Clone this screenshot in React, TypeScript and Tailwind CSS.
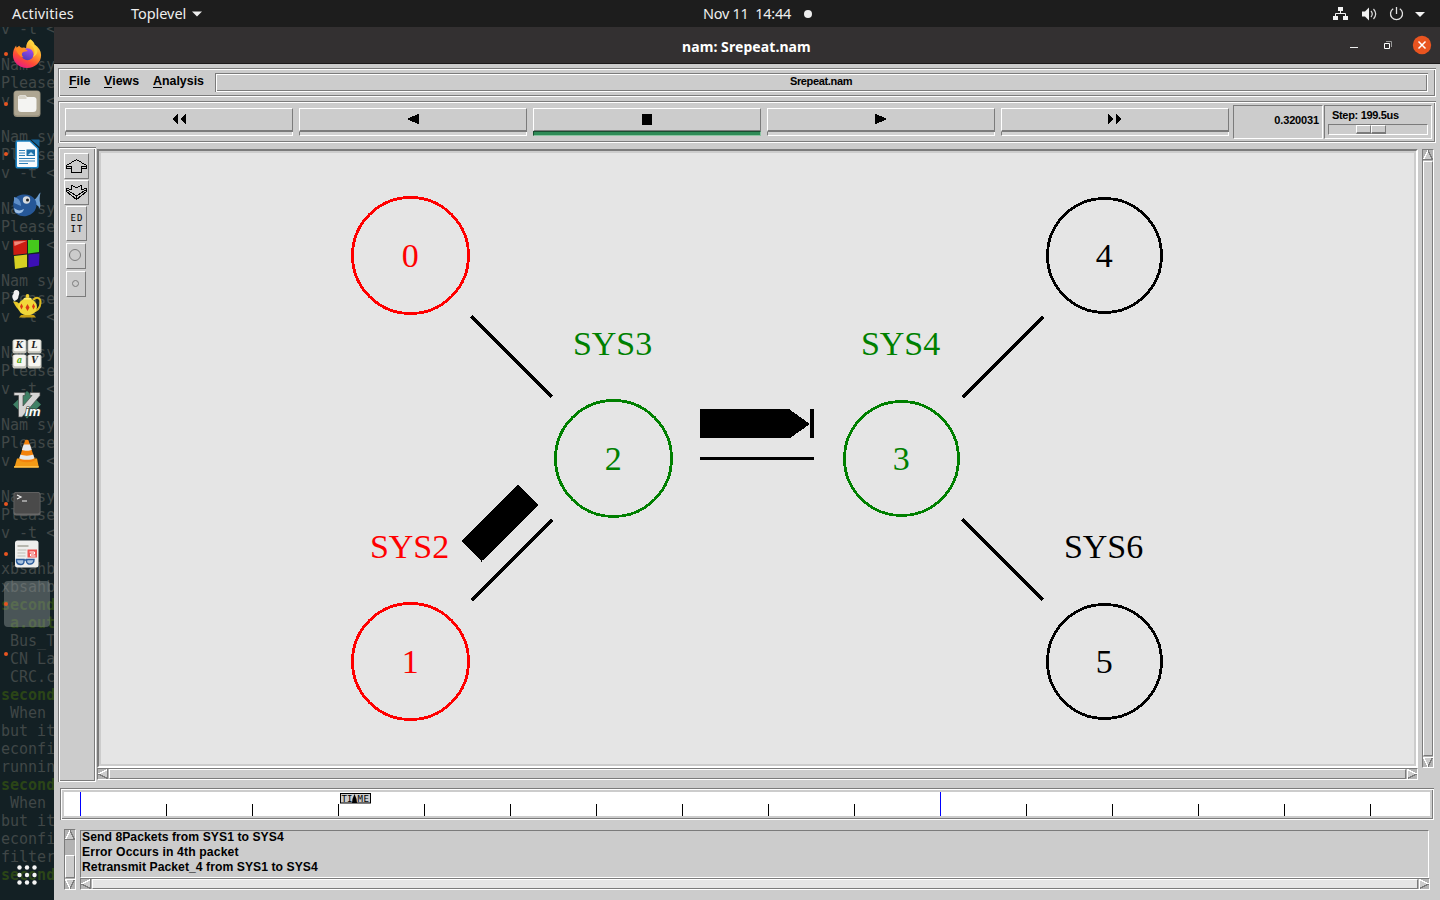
import React from "react";

const groove =
  "shadow-[inset_1px_1px_0_#7b7b7b,inset_-1px_-1px_0_#fff,inset_2px_2px_0_#fff,inset_-2px_-2px_0_#7b7b7b]";
const raised = "border border-t-white border-l-white border-r-[#7b7b7b] border-b-[#7b7b7b]";
const sunken = "border border-t-[#7b7b7b] border-l-[#7b7b7b] border-r-white border-b-white";

const block = ["Nam sy", "Please", "v -t <", ""];
const terminalLines = [
  "v -t <", "",
  ...block, ...block, ...block, ...block, ...block, ...block, ...block,
  "xbsahb", "xbsahb", "second", " a.out", " Bus_T", " CN La", " CRC.c", "second", " When ",
  "but it", "econfi", "runnin", "second", " When ", "but it", "econfi", "filter", "second",
];

function Icon({ children }: { children?: React.ReactNode }) {
  return (
    <svg width="32" height="32" viewBox="0 0 32 32" className="shrink-0">
      {children}
    </svg>
  );
}

const Firefox = () => (
  <Icon>
    <defs>
      <linearGradient id="fx" x1="0.8" y1="0" x2="0.25" y2="1">
        <stop offset="0" stopColor="#fff04a" />
        <stop offset="0.4" stopColor="#ffa02c" />
        <stop offset="0.7" stopColor="#ff4b36" />
        <stop offset="1" stopColor="#e6168b" />
      </linearGradient>
      <linearGradient id="fp" x1="0.7" y1="0" x2="0.3" y2="1">
        <stop offset="0" stopColor="#a94bf0" />
        <stop offset="1" stopColor="#4b3cb8" />
      </linearGradient>
    </defs>
    <path d="M19.5 1.3c2.2 1.4 3.6 3.2 4.2 5.4 4 2.6 6.4 6 6.4 10.2 0 7.4-6 13-14 13s-14.200-5.600-14.200-13c0-4 1.400-7.200 3.200-9.500l.5 2.600 2.500-2.200 2 2.300c1.900-.8 3.700-.8 5 .1 0-4 1.500-7.400 4.400-8.900z" fill="url(#fx)" />
    <circle cx="16.500" cy="16.200" r="6" fill="url(#fp)" />
    <path d="M4 10c4-1.500 8-1 13 3l-4 .8c-3 1-2.500 4-.5 5.500-4-.5-6-4-8.500-9.300z" fill="#ff8a22" />
    <path d="M19 6c4 3 6 8 3 13 5-2 6-8 2-12z" fill="#ffd43c" />
  </Icon>
);
const Files = () => (
  <Icon>
    <rect x="2.500" y="2.500" width="27" height="26.500" rx="3.500" fill="#968e7b" />
    <rect x="3.300" y="3" width="25.400" height="24.500" rx="3" fill="#aea692" />
    <path d="M7 10c0-1.700.8-2.700 2.400-2.700h4c1.200 0 1.800.4 2.500 1.700h7c1.500 0 2.600 1 2.600 2.500v9c0 2.500-1 3.500-3.500 3.500H10.500C8 24 7 23 7 20.500z" fill="#f4f4f2" />
    <path d="M7.500 11V9.500c0-1 .8-1.700 2-1.700h3.700c1 0 1.500.8 2.300 1.700.5.500.3 1.500-.8 1.500z" fill="#d8d4c8" />
  </Icon>
);
const Writer = () => (
  <Icon>
    <path d="M6.500 3H19l8 7.500V28c0 1.200-.7 1.800-2 1.800H7c-1.300 0-1.800-.6-1.800-1.800V4.500C5.200 3.500 5.500 3 6.500 3z" fill="#f7fafc" stroke="#1b83c4" strokeWidth="1.600" />
    <path d="M20 1.500h8.500V9z" fill="#17659a" />
    <path d="M8 12.500h6M8 15h6M8 17.500h6M8 20.500h16M8 23h16M8 25.500h9" stroke="#2c7fb8" strokeWidth="1.200" />
    <rect x="15.500" y="11.500" width="8.500" height="6.500" fill="#1c6fa8" />
    <path d="M17 17l3-3 3 3z" fill="#bfe0f2" />
  </Icon>
);
const Fish = () => (
  <Icon>
    <path d="M23.500 11.500c2.500-1 3.500-5 6-7-1 4-1 8-.5 10 .5 2 .5 4-.5 6-1-3-3-4-5-4z" fill="#6f9fd0" />
    <path d="M3 12c2-4 6-5.500 11-5.500 6.500 0 11.500 4.500 11.500 10 0 6-4 10-10 11.500C9 29 3 26 2.500 20c0-3-1-5 .5-8z" fill="#265797" />
    <path d="M3 9c5 1 7 5 7 9l-7-3z" fill="#5f8fc8" />
    <path d="M3 20c4 3 6 3 10 1-1 4-5 6-9 3z" fill="#9dbfe4" />
    <circle cx="15.500" cy="12" r="3.700" fill="#d6dade" />
    <circle cx="16.500" cy="12" r="1.500" fill="#222" />
  </Icon>
);
const Blocks = () => (
  <Icon>
    <path d="M2 2.500L16 2v13.500L2.500 17z" fill="#cc1c12" />
    <path d="M17 2h11v12l-11 1.500z" fill="#45c91c" />
    <path d="M3 18l13-1.500V29L4 31z" fill="#d6d023" />
    <path d="M17.500 16.500l11-1-.5 12-10.500 2z" fill="#3c0fb4" />
    <path d="M3 3.500L15.500 3l-12 5z" fill="#f0897a" />
  </Icon>
);
const Teapot = () => (
  <Icon>
    <path d="M22 12c4-4 8-2 7.500 3-.4 5-3.500 8-8 9" fill="none" stroke="#dcbb20" strokeWidth="2" />
    <path d="M2 13.500c3-.5 5 .5 7 3l1 6c-4-1-5-4-8-9z" fill="#e8c928" />
    <ellipse cx="16.500" cy="19" rx="9.500" ry="8.500" fill="#f2d83a" />
    <path d="M10 27h13l2 2.500H8z" fill="#c99f12" />
    <path d="M12 11.500c1-3 8-3 9 0z" fill="#ffed72" />
    <circle cx="16.500" cy="8" r="1.900" fill="#f0cf30" />
    <path d="M10.500 15.500l1.500 3-1.500 3-1.500-3zM16.500 16l2 3.500-2 3.500-2-3.500zM22.500 15.500l1.500 3-1.500 3-1.500-3z" fill="#d93a16" />
    <path d="M3.500 13c-3-3-2.500-6-1-7 0-3 1-4.500 3.500-4 3 1 2.500 4 1.500 6 0 2-1 4-4 5z" fill="#f2f2f2" />
  </Icon>
);
const Keys = () => (
  <Icon>
    {[[1.500, 1.500, "K"], [16.500, 1.500, "L"], [1.500, 16.500, "a"], [16.500, 16.500, "V"]].map(([x, y, t]) => (
      <g key={t as string}>
        <rect x={x} y={y} width="14" height="14" rx="2" fill="#c6c6bd" />
        <rect x={(x as number) + 1} y={(y as number) + 0.3} width="12" height="11.500" rx="1.800" fill="#f6f6f1" />
        <text x={(x as number) + 7} y={(y as number) + 8} textAnchor="middle" fontFamily="DejaVu Serif" fontWeight="bold" fontStyle="italic" fontSize="8.500" fill={t === "a" ? "#58a618" : "#222"}>{t}</text>
      </g>
    ))}
  </Icon>
);
const Vim = () => (
  <Icon>
    <path d="M16 3l14 13.500L16 30.500 2 16.500z" fill="#3f8065" />
    <path d="M3 4.500h11v3h-2v10.500L21 7.500h-2v-3h10v3L11 29H7.500V7.500H3z" fill="#d5d5d5" stroke="#4a4a4a" strokeWidth=".7" />
    <text x="14" y="27.500" fontFamily="Liberation Sans" fontWeight="bold" fontStyle="italic" fontSize="12.500" textLength="15.500" lengthAdjust="spacingAndGlyphs" fill="#fff" stroke="#2d3a36" strokeWidth="1.200" paintOrder="stroke">im</text>
  </Icon>
);
const Cone = () => (
  <Icon>
    <path d="M6 20.500h20l1.800 8.700H3.500z" fill="#f39a16" />
    <path d="M3.200 28h24.500v1.700H3z" fill="#ffbd40" />
    <path d="M14 2.500c.5-1 3-1 3.500 0L24 22c-3 3-13 3-16 0z" fill="#f3820c" />
    <path d="M12.700 6.500h6.200l1.800 5.200c-2 1.400-7.500 1.400-9.800 0zM9.500 16.500c3 1.500 9.800 1.500 12.700 0l1.200 3.700c-3 2-12 2-15.200 0z" fill="#e6e9ec" />
  </Icon>
);
const Term = () => (
  <Icon>
    <rect x="2.500" y="4" width="27" height="23.500" rx="2.500" fill="#686868" />
    <rect x="3.300" y="4.800" width="25.400" height="20.700" rx="2" fill="#4a4a4a" />
    <path d="M6 7l4 2-4 2M11 13h5" fill="none" stroke="#eee" strokeWidth="1.200" />
  </Icon>
);
const Reader = () => (
  <Icon>
    <rect x="4" y="2.500" width="23.500" height="27" rx="2.500" fill="#eeeeec" />
    <path d="M6.500 8h11" stroke="#b7b7ae" strokeWidth="2" />
    <path d="M6.500 12h9M6.500 15h8M6.500 18h8" stroke="#bdbdb5" strokeWidth="1" />
    <rect x="16.500" y="11.500" width="9.500" height="8" fill="#ef5350" />
    <path d="M18.500 14h5v2h-4v2h5" fill="none" stroke="#fff" strokeWidth="1" />
    <path d="M5.500 21.500h7.500v2c0 4-6.500 4-7.500 0zM15.500 21.500H23c0 5.500-7 6-7.500 2zM12.500 22h4" fill="#a9c3df" stroke="#2c5d9c" strokeWidth="1.400" />
  </Icon>
);

const dock = [
  { el: <Firefox />, dot: true },
  { el: <Files />, dot: true },
  { el: <Writer />, dot: true },
  { el: <Fish />, dot: false },
  { el: <Blocks />, dot: false },
  { el: <Teapot />, dot: false },
  { el: <Keys />, dot: false },
  { el: <Vim />, dot: false },
  { el: <Cone />, dot: false },
  { el: <Term />, dot: true },
  { el: <Reader />, dot: true },
  { el: <Icon />, dot: true, active: true },
  { el: <Icon />, dot: true },
];

function Sidebar() {
  return (
    <aside className="relative h-full w-[54px] shrink-0 overflow-hidden bg-[#132024]">
      <div className="absolute -top-[7px] left-px">
        {terminalLines.map((t, i) => (
          <div
            key={i}
            className={
              t === "second" || t === " a.out"
                ? "h-[18px] font-['DejaVu_Sans_Mono',monospace] text-[15px] leading-[18px] font-bold whitespace-pre text-[#2b4517]"
                : "h-[18px] font-['DejaVu_Sans_Mono',monospace] text-[15px] leading-[18px] whitespace-pre text-[#404747]"
            }
          >
            {t}
          </div>
        ))}
      </div>
      <div className="relative flex h-full flex-col pt-[2px]">
        {dock.map((d, i) => (
          <div key={i} className="flex h-[50px] items-center">
            <div
              className={
                d.active
                  ? "ml-1 flex h-[46px] w-[46px] items-center rounded-[4px] bg-[#8d9696]/45"
                  : "ml-1 flex h-[46px] w-[46px] items-center"
              }
            >
              <span className={d.dot ? "h-1 w-1 rounded-full bg-[#e95420]" : "h-1 w-1"} />
              <span className="ml-[3px]">{d.el}</span>
            </div>
          </div>
        ))}
        <svg width="20" height="20" viewBox="0 0 20 20" className="mt-auto mb-[15px] ml-[17px]">
          {[2.500, 10, 17.500].map((y) => [2.500, 10, 17.500].map((x) => <circle key={`${x}-${y}`} cx={x} cy={y} r="2.200" fill="#f5f5f5" />))}
        </svg>
      </div>
    </aside>
  );
}

function TopBar() {
  return (
    <header className="flex h-[27px] items-center bg-[#1d1d1d] font-['Noto_Sans',sans-serif] text-[14.500px] text-[#eee]">
      <span className="ml-3 w-[119px] tracking-[0.150px]">Activities</span>
      <span className="w-[58px] tracking-[-0.050px]">Toplevel</span>
      <svg width="10" height="6" className="ml-[3px]"><path d="M0 .5h10L5 5.500z" fill="#eee" /></svg>
      <span className="ml-[501px] w-[90px] tracking-[-0.300px] whitespace-pre">Nov 11  14:44</span>
      <span className="ml-[11px] h-2 w-2 rounded-full bg-[#eee]" />
      <svg width="96" height="18" viewBox="1332 4 96 18" className="ml-auto mr-3">
        <g fill="#f2f2f2">
          <path d="M1338 6h5v4h-5zM1333 15h5v4h-5zM1343 15h5v4h-5z" />
          <path d="M1340.500 10v2.500M1335.500 15v-2.500h10V15" fill="none" stroke="#f2f2f2" />
          <path d="M1362 10.500h3l4-4v13l-4-4h-3z" />
          <path d="M1371 10c1.500 1.800 1.500 4.200 0 6M1373.500 8c2.600 3 2.600 7 0 10" fill="none" stroke="#ddd" strokeWidth="1.200" />
          <path d="M1393.200 7.700a6 6 0 1 0 6.600 0M1396.500 6v7" fill="none" stroke="#e4e4e4" strokeWidth="1.300" />
          <path d="M1415 11h10l-5 5z" />
        </g>
      </svg>
    </header>
  );
}

function TitleBar() {
  return (
    <div className="flex h-[37px] shrink-0 items-center border-b border-[#1b191a] bg-[#333031]">
      <span className="mt-[2px] ml-[628px] w-[132px] font-['Noto_Sans',sans-serif] text-[14px] font-bold tracking-[0.080px] whitespace-nowrap text-white">nam: Srepeat.nam</span>
      <svg width="86" height="22" viewBox="1346 34 86 22" className="ml-auto mr-2">
        <path d="M1350 47.500h8" stroke="#eee" />
        <path d="M1384.500 43.500h5v5h-5z" fill="none" stroke="#fff" />
        <path d="M1386 41.500h5.500v5.500" fill="none" stroke="#999" />
        <circle cx="1422" cy="45" r="9.200" fill="#e95420" />
        <path d="M1418.500 41.500l7 7M1425.500 41.500l-7 7" stroke="#fff" strokeWidth="1.500" />
      </svg>
    </div>
  );
}

const menus = [
  { k: "F", r: "ile", c: "w-[35px]" },
  { k: "V", r: "iews", c: "w-[49px]" },
  { k: "A", r: "nalysis", c: "w-[62px]" },
];

function MenuBar() {
  return (
    <div className={`mt-1 ml-1 flex h-[29px] w-[1378px] shrink-0 pl-[11px] ${groove}`}>
      {menus.map((m) => (
        <span key={m.k} className={`mt-[6px] h-[17px] text-[12.400px] leading-[14px] font-bold ${m.c}`}>
          <span className="inline-block h-[14px] border-b border-black">{m.k}</span>{m.r}
        </span>
      ))}
      <div className={`mt-[5px] flex h-[19px] w-[1213px] items-center justify-center text-[11px] font-bold tracking-[-0.350px] ${groove}`}>
        <span className="-mt-[3px] -ml-px">Srepeat.nam</span>
      </div>
    </div>
  );
}

const controls = [
  "M14 1.500v11L8 7zM22 1.500v11L16 7z",
  "M21 1.500v11L9 7z",
  "M10 2h10v10.500H10z",
  "M9 1.500v11L21 7z",
  "M8 1.500v11L14 7zM16 1.500v11L22 7z",
];

function ToolBar() {
  return (
    <div className={`mt-1 ml-1 flex h-[42px] w-[1378px] shrink-0 pl-[7px] ${groove}`}>
      <div className="mt-[7px] flex gap-[6px]">
        {controls.map((d, i) => (
          <div key={i} className="w-[228px]">
            <div className="flex h-[24px] items-start justify-center border border-b-2 border-t-white border-r-[#7b7b7b] border-b-[#7b7b7b] border-l-white pt-[3px]">
              <svg width="30" height="14" shapeRendering="crispEdges"><path d={d} /></svg>
            </div>
            <div
              className={
                i === 2
                  ? "-mt-px h-[5px] border border-t-[#194d30] border-r-[#8cc4a2] border-b-[#8cc4a2] border-l-[#194d30] bg-[#2e8b57]"
                  : "h-[4px] border-r border-b border-l border-r-white border-b-white border-l-[#7b7b7b] bg-[#d2d2d2]"
              }
            />
          </div>
        ))}
      </div>
      <div className={`mt-1 ml-1 flex h-[34px] w-[90px] items-center justify-end pr-[3px] text-[11px] font-bold tracking-[-0.150px] ${sunken}`}>
        <span className="-mt-[3px]">0.320031</span>
      </div>
      <div className={`mt-1 ml-px h-[34px] w-[108px] ${sunken}`}>
        <div className="mt-[2px] ml-[7px] h-4 text-[11px] leading-[15px] font-bold tracking-[-0.320px] whitespace-nowrap">Step: 199.5us</div>
        <div className={`ml-[3px] h-[11px] w-[100px] pl-[27px] ${sunken}`}>
          <div className="flex h-[9px] w-[30px]">
            <div className={`w-[15px] border-b-2 ${raised}`} />
            <div className={`w-[15px] border-b-2 ${raised}`} />
          </div>
        </div>
      </div>
    </div>
  );
}

function SideTools() {
  return (
    <div className={`flex h-[635px] w-[38px] shrink-0 flex-col pt-[6px] pl-[6px] ${groove}`}>
      <div className={`h-[26px] w-[25px] ${raised}`}>
        <svg width="23" height="24" viewBox="65 154 23 24" fill="none" stroke="#000" shapeRendering="crispEdges">
          <path d="M76.500 159.500l-10 6v3h5v4h10v-4h5v-3zM66.500 166.500h5v4M86.500 166.500h-5v4" />
        </svg>
      </div>
      <div className={`mt-px h-[25px] w-[25px] ${raised}`}>
        <svg width="23" height="23" viewBox="65 181 23 23" fill="none" stroke="#000" shapeRendering="crispEdges">
          <path d="M71.500 185.500l5 2 5-2v4l5-1v3l-10 8-10-8v-3l5 1zM66.500 189.500l10 6.500 10-6.500M76.500 196v3" />
        </svg>
      </div>
      <div className={`mt-px ml-[2px] h-[35px] w-[21px] pt-[6px] text-center font-['DejaVu_Sans_Mono',monospace] text-[9px] leading-[11px] ${raised}`}>
        <div className="pl-px tracking-[1px]">ED</div>
        <div className="pl-px tracking-[1px]">IT</div>
      </div>
      <div className={`mt-[2px] ml-[2px] h-[26px] w-[20px] ${raised}`}>
        <svg width="18" height="24"><circle cx="8" cy="11" r="5.500" fill="none" stroke="#7b7b7b" /></svg>
      </div>
      <div className={`mt-[2px] ml-[2px] h-[26px] w-[20px] ${raised}`}>
        <svg width="18" height="24"><circle cx="8.500" cy="11.500" r="3" fill="none" stroke="#7b7b7b" /></svg>
      </div>
    </div>
  );
}

const nodes = [
  { x: 410.5, y: 255.5, r: 58, c: "#ff0000", t: "0" },
  { x: 410.5, y: 661.5, r: 58, c: "#ff0000", t: "1", label: "SYS2" },
  { x: 613.5, y: 458.5, r: 58, c: "#008000", t: "2", label: "SYS3" },
  { x: 901.5, y: 458.5, r: 57, c: "#008000", t: "3", label: "SYS4" },
  { x: 1104.5, y: 255.5, r: 57, c: "#000000", t: "4" },
  { x: 1104.5, y: 661.5, r: 57, c: "#000000", t: "5", label: "SYS6" },
];

function Network() {
  return (
    <div className="mt-[2px] h-[619px] w-[1321px] border-2 border-t-[#7b7b7b] border-r-white border-b-white border-l-[#7b7b7b] bg-[#e5e5e5] shadow-[inset_0_0_0_2px_#ccc]">
      <svg width="1317" height="615" viewBox="99 151 1317 615">
        <g stroke="#000" strokeWidth="3.500" shapeRendering="crispEdges">
          <path d="M471.500 316.500l80.500 80.500M471.500 600.500l80.500-80.500M962.500 397.500l80.500-80.500M962.500 519.500l80.500 80.500" />
          <path d="M700 458.500h114" strokeWidth="3" />
        </g>
        <path d="M700 409h89l21 15-20 14h-90zM810 409h4v29h-4zM518 485l20.500 20-57 56.500L461 541z" shapeRendering="crispEdges" />
        {nodes.map((n) => (
          <g key={n.t} fontFamily="'Liberation Serif', serif" fontSize="34" textAnchor="middle" fill={n.c}>
            <circle cx={n.x} cy={n.y} r={n.r} fill="none" stroke={n.c} strokeWidth="2.800" shapeRendering="crispEdges" />
            <text x={n.x - 0.2} y={n.y + 11.5}>{n.t}</text>
            {n.label && <text x={n.x - 0.9} y={n.y - 103.5}>{n.label}</text>}
          </g>
        ))}
      </svg>
    </div>
  );
}

function Arrow({ dir }: { dir: "l" | "r" | "u" | "d" }) {
  const d = { l: "M9.500 .5v9L.5 5z", r: "M.5 .5v9l9-4.500z", u: "M.5 9.500h9L5 .5z", d: "M.5 .5h9L5 9.500z" }[dir];
  const light = { l: "M.5 5l9-4.500", r: "M.5 9.500v-9l9 4.500", u: "M.5 9.500L5 .5", d: "M9.500 .5h-9L5 9.500" }[dir];
  return (
    <svg width="10" height="10" className="shrink-0" shapeRendering="crispEdges">
      <path d={d} fill="#ccc" stroke="#7b7b7b" />
      <path d={light} fill="none" stroke="#fff" />
    </svg>
  );
}

function HScroll({ light }: { light?: boolean }) {
  return (
    <div className={`flex h-[12px] w-full bg-[#b3b3b3] ${sunken}`}>
      <Arrow dir="l" />
      <div className={light ? `mx-px flex-1 bg-[#e5e5e5] ${raised}` : `mx-px flex-1 bg-[#ccc] ${raised}`} />
      <Arrow dir="r" />
    </div>
  );
}

const ticks = Array.from({ length: 16 }, (_, i) => i);

function Timeline() {
  return (
    <div className={`mt-[6px] ml-[6px] h-8 w-[1374px] shrink-0 p-1 ${groove}`}>
      <svg width="1366" height="24" viewBox="64 792 1366 24" className="block bg-white">
        {ticks.map((i) => (
          <rect key={i} x={80 + i * 86} y={i % 10 === 0 ? 792 : 804} width="1" height={i % 10 === 0 ? 24 : 12} fill={i % 10 === 0 ? "#0000ff" : "#000"} />
        ))}
        <rect x="340.500" y="793.500" width="30" height="9.500" fill="#ccc" stroke="#000" />
        <g fontFamily="'DejaVu Sans Mono', monospace" fontSize="9">
          <text x="341.500" y="801.500" textLength="11">TI</text>
          <text x="357.500" y="801.500" textLength="11.500">ME</text>
        </g>
        <path d="M354.500 794l2 5 .5 4h-5l.5-4z" />
      </svg>
    </div>
  );
}

function LogPanel() {
  return (
    <div className="mt-[9px] ml-[10px] flex h-[61px] gap-1">
      <div className={`flex w-[12px] flex-col bg-[#b3b3b3] ${sunken}`}>
        <Arrow dir="u" />
        <div className={`mt-[15px] mb-px flex-1 bg-[#ccc] ${raised}`} />
        <Arrow dir="d" />
      </div>
      <div className="w-[1350px]">
        <div className={`mt-px mb-px h-[48px] w-[1349px] pl-px text-[12.200px] leading-[15px] font-bold tracking-[0.040px] whitespace-pre ${sunken}`}>
          <div className="-mt-px">Send 8Packets from SYS1 to SYS4</div>
          <div className="tracking-[0.140px]">Error Occurs in 4th packet</div>
          <div>Retransmit Packet_4 from SYS1 to SYS4</div>
        </div>
        <div className="-mt-px"><HScroll light /></div>
      </div>
    </div>
  );
}

export default function App() {
  return (
    <div className="flex h-[900px] w-[1440px] flex-col overflow-hidden font-['Liberation_Sans',sans-serif] text-black">
      <TopBar />
      <div className="flex h-[873px]">
        <Sidebar />
        <main className="flex w-[1386px] flex-col bg-[#ccc]">
          <TitleBar />
          <MenuBar />
          <ToolBar />
          <div className="mt-1 ml-1 flex h-[635px] shrink-0">
            <SideTools />
            <div className="ml-px w-[1321px]">
              <Network />
              <HScroll />
            </div>
            <div className={`mt-[2px] ml-1 flex h-[619px] w-[12px] flex-col bg-[#b3b3b3] ${sunken}`}>
              <Arrow dir="u" />
              <div className={`my-px flex-1 bg-[#ccc] ${raised}`} />
              <Arrow dir="d" />
            </div>
          </div>
          <Timeline />
          <LogPanel />
        </main>
      </div>
    </div>
  );
}
